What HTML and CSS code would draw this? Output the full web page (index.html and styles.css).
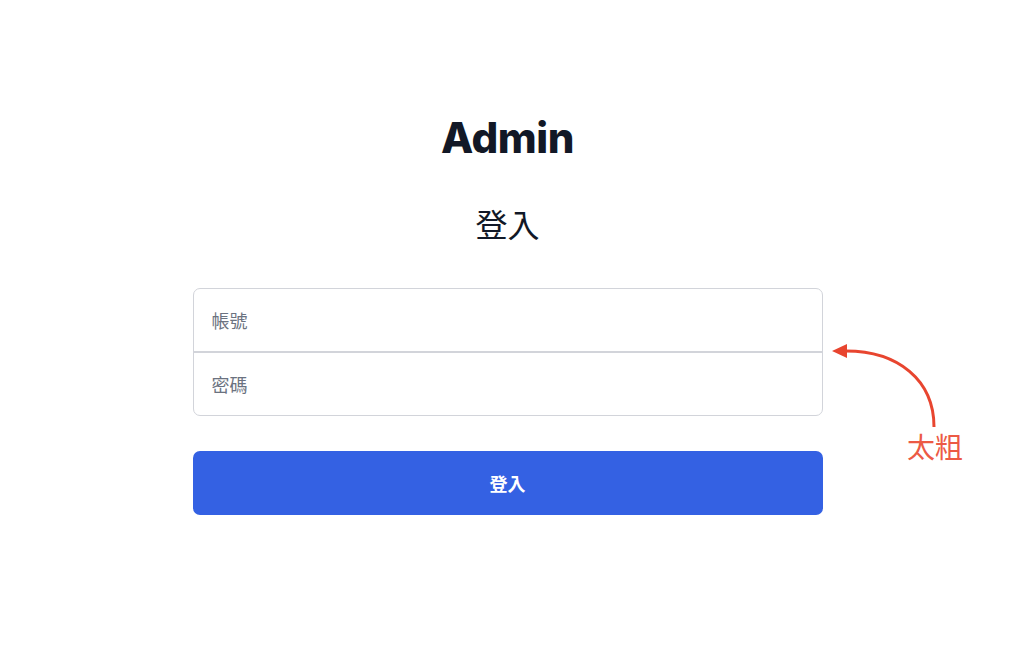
FILE: index.html
```html
<!DOCTYPE html>
<html lang="zh-Hant">
<head>
<meta charset="utf-8">
<title>Admin 登入</title>
<link rel="stylesheet" href="styles.css">
</head>
<body>
<main class="page">
  <div class="panel">
    <h1 class="brand">Admin</h1>
    <h2 class="title">登入</h2>
    <form class="form">
      <div class="fields">
        <input class="field" type="text" placeholder="帳號">
        <div class="divider"></div>
        <input class="field" type="password" placeholder="密碼">
      </div>
      <button class="submit" type="button">登入</button>
    </form>
  </div>
</main>
<div class="note">
  <svg class="note-arrow" width="1024" height="661" viewBox="0 0 1024 661">
    <path d="M934 427 C934 380 898 351 846 351" fill="none" stroke="#e8452f" stroke-width="3"/>
    <polygon points="832,351 847,344 847,358" fill="#e8452f"/>
  </svg>
  <span class="note-text">太粗</span>
</div>
</body>
</html>
```
FILE: styles.css
```css
html, body {
  margin: 0;
  padding: 0;
  background: #ffffff;
}
body {
  font-family: Inter, "Noto Sans CJK TC", "Noto Sans", sans-serif;
  color: #111827;
  width: 1024px;
  height: 661px;
  overflow: hidden;
  position: relative;
}
.page {
  display: flex;
  justify-content: center;
  padding-right: 9px;
  padding-top: 112px;
}
.panel {
  width: 630px;
  display: flex;
  flex-direction: column;
  align-items: center;
}
.brand {
  margin: 0;
  font-size: 42px;
  line-height: 52px;
  font-weight: 800;
  letter-spacing: -0.5px;
  color: #121826;
}
.title {
  margin: 38px 0 0;
  font-family: "Noto Sans CJK TC", sans-serif;
  font-size: 32px;
  line-height: 42px;
  font-weight: 400;
  color: #111827;
}
.form {
  width: 100%;
  margin-top: 44px;
  display: flex;
  flex-direction: column;
  gap: 35px;
}
.fields {
  display: flex;
  flex-direction: column;
  border: 1.5px solid #d2d4da;
  border-radius: 7px;
  background: #fff;
}
.field {
  border: 0;
  outline: none;
  height: 62px;
  padding: 0 18px;
  font-family: "Noto Sans CJK TC", sans-serif;
  font-size: 18px;
  background: transparent;
  color: #111827;
}
.field::placeholder {
  color: #6b7280;
}
.divider {
  height: 2px;
  background: #d2d4da;
}
.submit {
  height: 64px;
  border: 0;
  border-radius: 7px;
  background: #3461e3;
  color: #ffffff;
  font-family: "Noto Sans CJK TC", sans-serif;
  font-size: 18px;
  font-weight: 700;
}
.note {
  position: absolute;
  inset: 0;
  pointer-events: none;
}
.note-arrow {
  position: absolute;
  left: 0;
  top: 0;
}
.note-text {
  position: absolute;
  left: 907px;
  top: 426px;
  font-family: "Noto Sans CJK TC", sans-serif;
  font-size: 28px;
  line-height: 40px;
  color: #ec5a45;
}
```
